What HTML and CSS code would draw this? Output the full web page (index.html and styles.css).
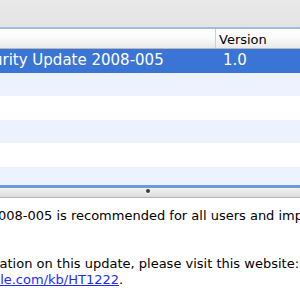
FILE: index.html
```html
<!DOCTYPE html>
<html>
<head>
<meta charset="utf-8">
<link rel="stylesheet" href="styles.css">
</head>
<body>
<div class="window">
  <div class="toolbar"></div>
  <div class="table">
    <div class="thead">
      <div class="th th-name"></div>
      <div class="th th-version">Version</div>
    </div>
    <div class="row selected">
      <div class="cell cell-name">Security Update 2008-005</div>
      <div class="cell cell-version">1.0</div>
    </div>
    <div class="row alt"></div>
    <div class="row"></div>
    <div class="row alt"></div>
    <div class="row"></div>
    <div class="row alt"></div>
  </div>
  <div class="splitter"><span class="dimple"></span></div>
  <div class="desc">
    <p class="para">
      <span class="ln ln-1">Security Update 2008-005 is recommended for all users and improves the security of</span>
      <span class="ln ln-2">Mac OS X.</span>
    </p>
    <p class="para">
      <span class="ln ln-3">For detailed information on this update, please visit this website:</span>
      <span class="ln ln-4"><a class="link" href="#">http://www.apple.com/kb/HT1222</a>.</span>
    </p>
  </div>
</div>
</body>
</html>
```
FILE: styles.css
```css
html, body {
  margin: 0;
  padding: 0;
  background: #ffffff;
}
body {
  width: 300px;
  height: 300px;
  overflow: hidden;
  font-family: "DejaVu Sans", sans-serif;
  color: #000;
}
.window {
  width: 300px;
}
.toolbar {
  height: 27px;
  background: linear-gradient(#e9e9e9, #e4e4e4);
}
.table {
  height: 156px;
  overflow: hidden;
  border-top: 2px solid #a4bcdb;
  border-bottom: 3px solid #6f9ad8;
  margin-left: -40px;
  width: 400px;
}
.thead {
  display: grid;
  grid-template-columns: 256px 1fr;
  height: 19px;
  background: linear-gradient(#ffffff 0%, #fbfbfb 45%, #e9e9e9 100%);
  border-bottom: 1px solid #b9b9b9;
}
.th {
  font-size: 13px;
  line-height: 16px;
  padding-top: 3px;
}
.th-name {
  border-right: 1px solid #cfcfcf;
}
.th-version {
  padding-left: 3px;
}
.row {
  display: grid;
  grid-template-columns: 257px 1fr;
  height: 23.6px;
  background: #ffffff;
}
.row.alt {
  background: #edf3fe;
}
.row.selected {
  background: #3a75d6;
  color: #ffffff;
}
.cell {
  font-size: 15px;
  line-height: 23.6px;
  white-space: nowrap;
}
.cell-name {
  padding-left: 6px;
}
.cell-version {
  padding-left: 6px;
}
.splitter {
  height: 9px;
  background: linear-gradient(#f2f2f2, #dcdcdc);
  border-bottom: 1px solid #b4b4b4;
  display: flex;
  padding-left: 146px;
}
.dimple {
  width: 4px;
  height: 4px;
  margin-top: 1px;
  border-radius: 50%;
  background: #3a3a3a;
  box-shadow: 0 1px 0 #f8f8f8;
}
.desc {
  padding-top: 10px;
  font-size: 13px;
  line-height: 16px;
}
.para {
  margin: 0 0 16px 0;
}
.ln {
  display: block;
  white-space: nowrap;
}
.ln-1, .ln-2 {
  margin-left: -119px;
}
.ln-3 {
  margin-left: -124px;
}
.ln-4 {
  margin-left: -99px;
}
.link {
  color: #1c2cff;
  text-decoration: underline;
}
```
